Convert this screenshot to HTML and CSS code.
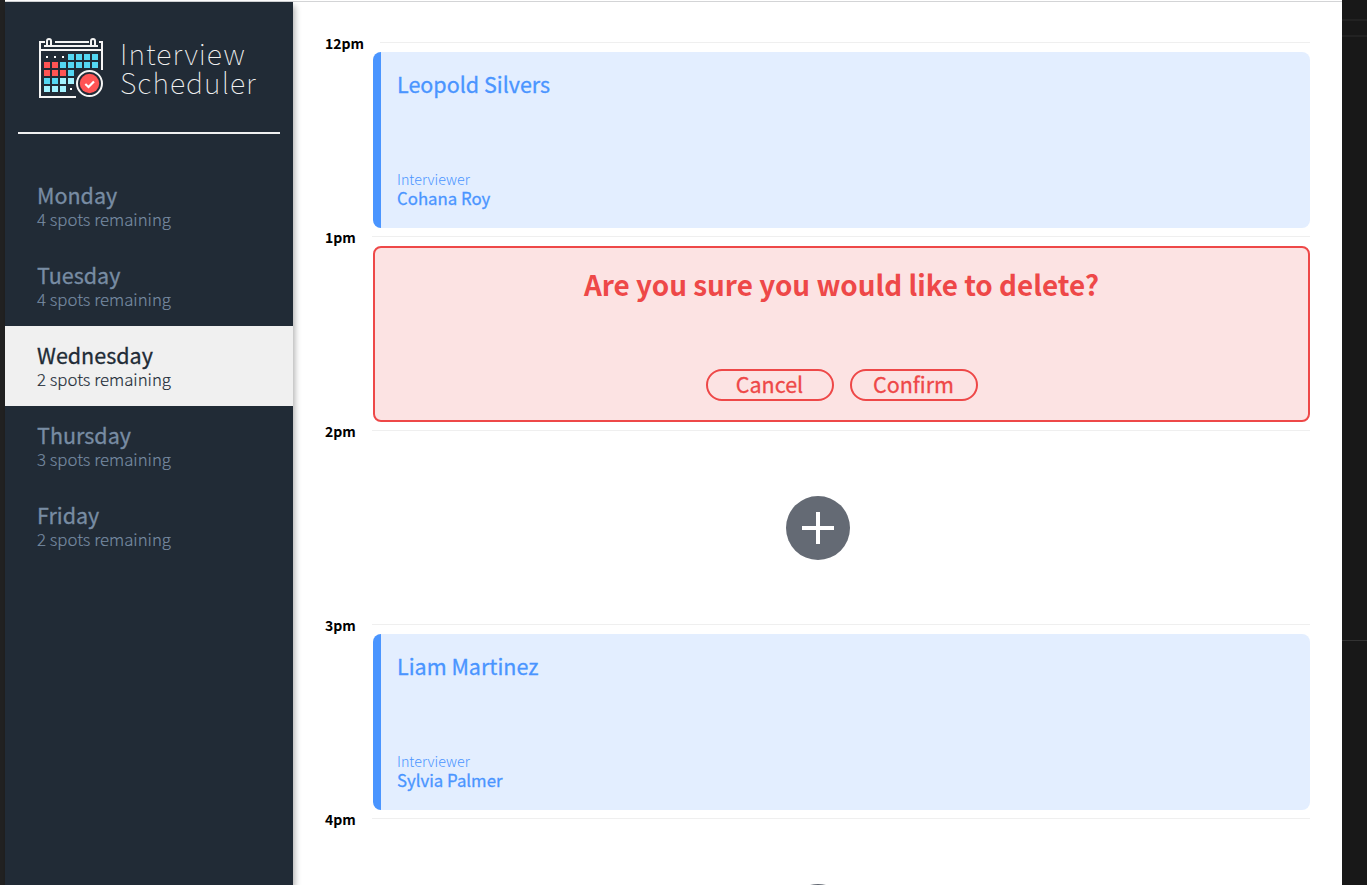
FILE: index.html
```html
<!DOCTYPE html>
<html lang="en">
<head>
<meta charset="utf-8">
<title>Interview Scheduler</title>
<link rel="stylesheet" href="styles.css">
</head>
<body>
<div class="edge-left"></div>
<div class="window">
  <aside class="sidebar">
    <div class="logo">
      <svg class="logo-icon" width="66" height="62" viewBox="0 0 66 62">
        <g fill="none" stroke="#f5f5f5" stroke-width="2">
          <path d="M7 5H2V60H38M17 5H51M61 5H64V33M1 13H65M6 9H60"/>
          <path d="M9 9V4a2 2 0 0 1 4 0V9M53 9V4a2 2 0 0 1 4 0V9"/>
        </g>
        <path fill="#54d7f3" d="M30 17h6v6h-6zM38 17h6v6h-6zM46 17h6v6h-6zM54 17h6v6h-6zM22 25h6v6h-6zM30 25h6v6h-6zM38 25h6v6h-6zM46 25h6v6h-6zM54 25h6v6h-6zM30 33h6v6h-6zM6 41h6v6H6zM14 41h6v6h-6z"/>
        <path fill="#ff5454" d="M6 25h6v6H6zM14 25h6v6h-6zM6 33h6v6H6zM14 33h6v6h-6zM22 33h6v6h-6z"/>
        <path fill="#a2f2ff" d="M22 41h6v6h-6zM30 41h6v6h-6zM6 49h6v6H6zM14 49h6v6h-6zM22 49h6v6h-6z"/>
        <path fill="#fff" d="M8 19h2v2H8zM16 19h2v2h-2zM24 19h2v2h-2zM32 51h2v2h-2z"/>
        <circle cx="51.5" cy="46.5" r="14" fill="#212b36"/>
        <circle cx="51.5" cy="46.5" r="12.5" fill="#212b36" stroke="#f5f5f5" stroke-width="2"/>
        <circle cx="51.5" cy="46.5" r="9.7" fill="#ff5454"/>
        <path d="M47.3 47l3.2 3 5.5-5.6" fill="none" stroke="#fff" stroke-width="2.2"/>
      </svg>
      <div class="logo-text"><div>Interview</div><div>Scheduler</div></div>
    </div>
    <hr class="rule">
    <nav class="days">
      <div class="day"><h2>Monday</h2><p>4 spots remaining</p></div>
      <div class="day"><h2>Tuesday</h2><p>4 spots remaining</p></div>
      <div class="day selected"><h2>Wednesday</h2><p>2 spots remaining</p></div>
      <div class="day"><h2>Thursday</h2><p>3 spots remaining</p></div>
      <div class="day"><h2>Friday</h2><p>2 spots remaining</p></div>
    </nav>
  </aside>
  <main class="schedule">
    <section class="slot">
      <header class="time"><h4>12pm</h4><span class="line"></span></header>
      <div class="card show"><h2>Leopold Silvers</h2><div><h4>Interviewer</h4><h3>Cohana Roy</h3></div></div>
    </section>
    <section class="slot">
      <header class="time"><h4>1pm</h4><span class="line"></span></header>
      <div class="card confirm"><h1>Are you sure you would like to delete?</h1><div class="actions"><button class="button">Cancel</button><button class="button">Confirm</button></div></div>
    </section>
    <section class="slot">
      <header class="time"><h4>2pm</h4><span class="line"></span></header>
      <div class="empty"><svg width="64" height="64" viewBox="0 0 64 64"><circle cx="32" cy="32" r="32" fill="#646a74"/><path d="M16 32H48M32 16V48" stroke="#fff" stroke-width="4"/></svg></div>
    </section>
    <section class="slot">
      <header class="time"><h4>3pm</h4><span class="line"></span></header>
      <div class="card show"><h2>Liam Martinez</h2><div><h4>Interviewer</h4><h3>Sylvia Palmer</h3></div></div>
    </section>
    <section class="slot">
      <header class="time"><h4>4pm</h4><span class="line"></span></header>
      <div class="empty"><svg width="64" height="64" viewBox="0 0 64 64"><circle cx="32" cy="32" r="32" fill="#646a74"/><path d="M16 32H48M32 16V48" stroke="#fff" stroke-width="4"/></svg></div>
    </section>
  </main>
</div>
<div class="edge-right"><div class="edge-tab"></div><div class="edge-panel"></div><div class="edge-rest"></div></div>
</body>
</html>
```

FILE: styles.css
```css
* { box-sizing: border-box; margin: 0; padding: 0; }
body {
  display: flex;
  height: 885px;
  overflow: hidden;
  background: #fff;
  font-family: "Noto Sans CJK SC", "Noto Sans", sans-serif;
}
.edge-left { width: 5px; flex: none; background: #222; }
.edge-right { width: 25px; flex: none; background: #181818; }
.edge-tab { height: 21px; border-bottom: 2px solid #222; }
.edge-panel { height: 16px; border-bottom: 2px solid #222; }
.edge-rest { height: 604px; border-bottom: 1px solid #333; }
.window {
  display: flex;
  width: 1337px;
  flex: none;
  margin-top: 1px;
  border-top: 1px solid #d3d4d6;
}
.sidebar {
  width: 288px;
  flex: none;
  background: #212b36;
  box-shadow: 2px 4px 6px rgba(0, 0, 0, .3);
}
.logo { display: flex; gap: 16px; padding: 35px 0 0 33px; height: 130px; }
.logo-icon { flex: none; }
.logo-text {
  padding-top: 1px;
  color: #f0f0f0;
  font-size: 28.6px;
  font-weight: 100;
  line-height: 29px;
  letter-spacing: 1.05px;
  white-space: nowrap;
}
.rule { height: 2px; border: 0; margin: 0 13px; background: #f0f0f0; }
.days { padding-top: 32px; }
.day { height: 80px; padding: 17px 32px 0; color: #788ca3; }
.day h2, .show h2 { font-size: 21.5px; font-weight: 400; line-height: 24px; -webkit-text-stroke: .3px currentColor; }
.day p { font-size: 16.8px; font-weight: 300; line-height: 24px; -webkit-text-stroke: .15px currentColor; }
.selected { background: #f0f0f0; color: #212b36; }
.schedule { flex: 1; padding: 32px 32px 0; overflow: hidden; }
.slot { height: 194px; }
.time { display: flex; gap: 16px; height: 18px; }
.time h4 { font-size: 14px; font-weight: 700; line-height: 18px; color: #000; }
.line { flex: 1; height: 1px; margin-top: 8px; background: #efefef; }
.card { height: 176px; margin-left: 48px; border-radius: 8px; }
.show {
  display: flex;
  flex-direction: column;
  justify-content: space-between;
  padding: 20px 16px;
  color: #4a95ff;
  background: #e3eeff;
  border-left: 8px solid #4a95ff;
}
.show h4 { font-size: 14.3px; font-weight: 300; line-height: 18px; }
.show h3 { font-size: 16.8px; font-weight: 400; line-height: 20px; -webkit-text-stroke: .3px currentColor; }
.confirm {
  display: flex;
  flex-direction: column;
  align-items: center;
  justify-content: space-between;
  padding: 19px 0;
  color: #ee4848;
  background: #fce3e3;
  border: 2px solid #ee4848;
}
.confirm h1 { font-size: 27.85px; font-weight: 700; line-height: 34px; }
.actions { display: flex; gap: 16px; }
.button {
  width: 128px;
  height: 32px;
  padding-bottom: 2px;
  border: 2px solid #ee4848;
  border-radius: 16px;
  background: transparent;
  color: #ee4848;
  font: 400 21.5px/26px "Noto Sans CJK SC", sans-serif;
  -webkit-text-stroke: .3px currentColor;
}
.empty { height: 176px; display: flex; align-items: center; justify-content: center; }
```
